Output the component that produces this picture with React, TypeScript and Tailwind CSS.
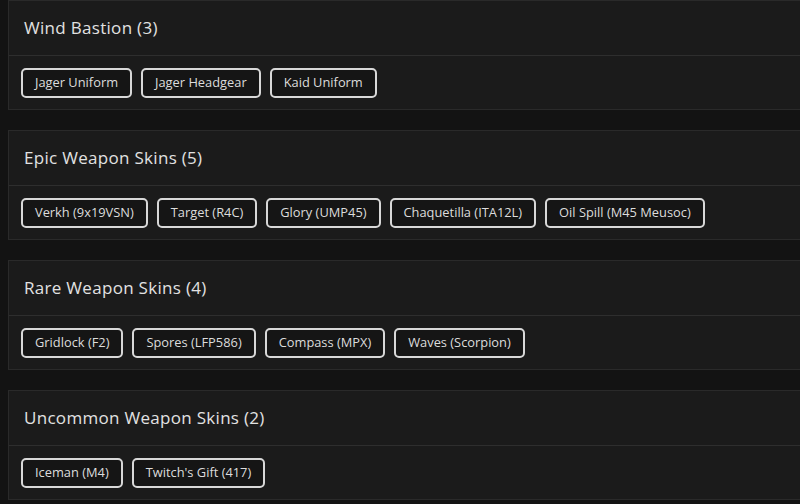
import React from "react";

const sections: { title: string; items: string[] }[] = [
  { title: "Wind Bastion (3)", items: ["Jager Uniform", "Jager Headgear", "Kaid Uniform"] },
  {
    title: "Epic Weapon Skins (5)",
    items: ["Verkh (9x19VSN)", "Target (R4C)", "Glory (UMP45)", "Chaquetilla (ITA12L)", "Oil Spill (M45 Meusoc)"],
  },
  {
    title: "Rare Weapon Skins (4)",
    items: ["Gridlock (F2)", "Spores (LFP586)", "Compass (MPX)", "Waves (Scorpion)"],
  },
  { title: "Uncommon Weapon Skins (2)", items: ["Iceman (M4)", "Twitch's Gift (417)"] },
];

export default function App() {
  return (
    <div
      className="w-[800px] h-[504px] overflow-hidden bg-[#131313]"
      style={{ fontFamily: '"Open Sans", "Noto Sans", sans-serif' }}
    >
      <div className="flex flex-col gap-5 pl-2 w-[860px]">
        {sections.map((s) => (
          <div key={s.title} className="border border-[#2a2a2a] bg-[#1b1b1b] shrink-0">
            <div className="h-[55px] flex items-center px-[15px] border-b border-[#2e2e2e]">
              <h2 className="text-[17px] font-medium text-[#e2e2e2] tracking-[0.3px]">{s.title}</h2>
            </div>
            <div className="flex gap-[9px] px-3 pt-3 pb-[11px]">
              {s.items.map((it) => (
                <div
                  key={it}
                  className="h-[30px] px-3 flex items-center border-2 border-[#d8d8d8] rounded-[5px] bg-[#151515] text-[12.85px] text-[#dcdcdc] whitespace-nowrap"
                >
                  {it}
                </div>
              ))}
            </div>
          </div>
        ))}
      </div>
    </div>
  );
}
